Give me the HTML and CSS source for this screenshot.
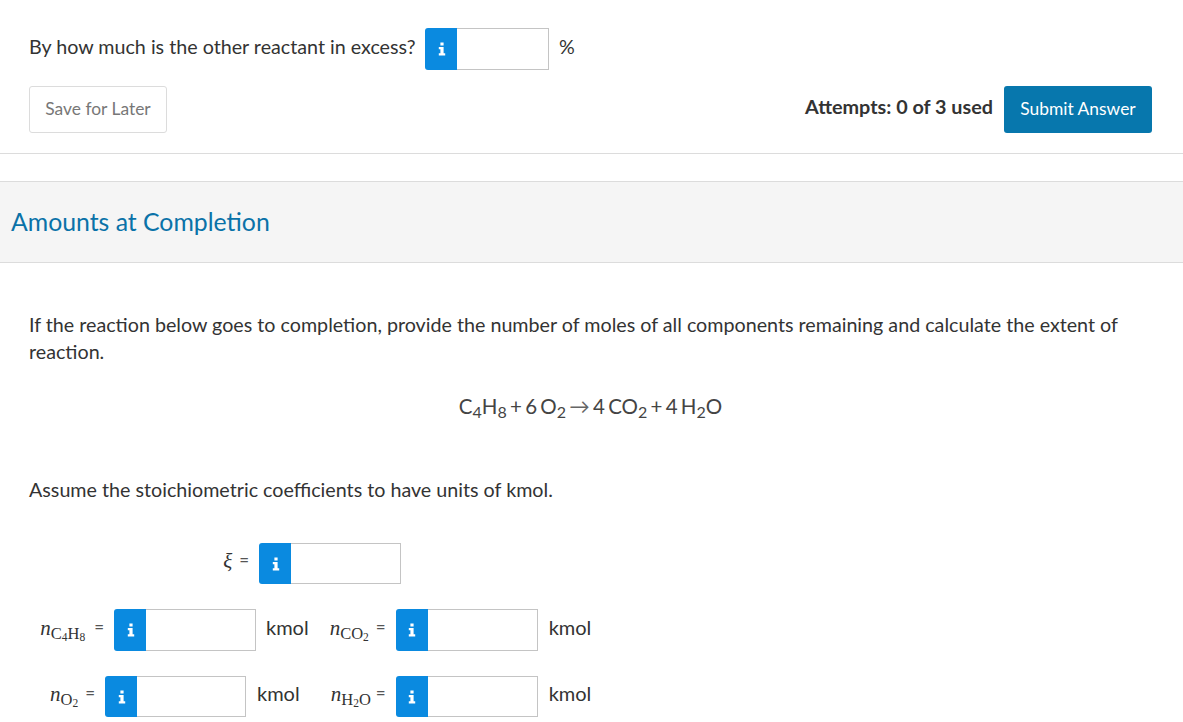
FILE: index.html
```html
<!DOCTYPE html>
<html lang="en">
<head>
<meta charset="utf-8">
<title>Amounts at Completion</title>
<link rel="stylesheet" href="styles.css">
</head>
<body>
<svg class="defs" width="0" height="0" aria-hidden="true"><symbol id="info" viewBox="0 0 10 16"><path d="M3 0h4v3.6H3zM1 5.6h6v7.6h2V16H1v-2.8h2V8.4H1z"/></symbol></svg>
<section class="top">
  <div class="question">
    <span class="q-text">By how much is the other reactant in excess?</span>
    <span class="field"><span class="info"><svg class="info-icon"><use href="#info"/></svg></span><span class="box"></span></span>
    <span class="unit">%</span>
  </div>
  <div class="actions">
    <button class="save">Save for Later</button>
    <div class="submit-group">
      <span class="attempts">Attempts: 0 of 3 used</span>
      <button class="submit">Submit Answer</button>
    </div>
  </div>
</section>
<h2 class="heading">Amounts at Completion</h2>
<section class="body">
  <p class="intro">If the reaction below goes to completion, provide the number of moles of all components remaining and calculate the extent of reaction.</p>
  <p class="equation">C<sub>4</sub>H<sub>8</sub> + 6 O<sub>2</sub> <span class="arrow">→</span> 4 CO<sub>2</sub> + 4 H<sub>2</sub>O</p>
  <p class="assume">Assume the stoichiometric coefficients to have units of kmol.</p>
  <div class="row row-xi">
    <span class="label"><i>ξ</i> <span class="eq">=</span></span>
    <span class="field"><span class="info"><svg class="info-icon"><use href="#info"/></svg></span><span class="box"></span></span>
  </div>
  <div class="row row-a">
    <span class="label l-c4h8"><i>n</i><sub>C<sub>4</sub>H<sub>8</sub></sub> <span class="eq">=</span></span>
    <span class="field"><span class="info"><svg class="info-icon"><use href="#info"/></svg></span><span class="box"></span></span>
    <span class="kmol">kmol</span>
    <span class="label l-co2"><i>n</i><sub>CO<sub>2</sub></sub> <span class="eq">=</span></span>
    <span class="field"><span class="info"><svg class="info-icon"><use href="#info"/></svg></span><span class="box"></span></span>
    <span class="kmol">kmol</span>
  </div>
  <div class="row row-b">
    <span class="label l-o2"><i>n</i><sub>O<sub>2</sub></sub> <span class="eq">=</span></span>
    <span class="field"><span class="info"><svg class="info-icon"><use href="#info"/></svg></span><span class="box"></span></span>
    <span class="kmol">kmol</span>
    <span class="label l-h2o"><i>n</i><sub>H<sub>2</sub>O</sub><span class="eq">=</span></span>
    <span class="field"><span class="info"><svg class="info-icon"><use href="#info"/></svg></span><span class="box"></span></span>
    <span class="kmol">kmol</span>
  </div>
</section>
</body>
</html>
```
FILE: styles.css
```css
* { box-sizing: border-box; }
html, body { margin: 0; padding: 0; height: 722px; overflow: hidden; }
body { background: #fff; color: #333; font-family: Lato, "Liberation Sans", sans-serif; font-size: 19.7px; }
.defs { position: absolute; }
.top { padding: 28px 31px 0 29px; height: 154px; border-bottom: 1px solid #dcdcdc; }
.question { display: flex; align-items: center; height: 42px; }
.q-text { width: 386px; white-space: nowrap; }
.q-text, .unit { margin-bottom: 6px; }
.field { display: inline-flex; width: 124px; height: 42px; margin-left: 10px; flex: none; }
.info { width: 32px; background: #0a8ae0; border-radius: 3px 0 0 3px; display: flex; align-items: center; justify-content: center; flex: none; padding-left: 1px; }
.info-icon { width: 8px; height: 14px; fill: #fff; }
.box { flex: 1; background: #fff; border: 1px solid #c4c4c4; border-left: 0; }
.unit { margin-left: 10px; }
.actions { display: flex; justify-content: space-between; align-items: flex-start; margin-top: 16px; }
button { font-family: inherit; font-size: 17.4px; height: 47px; border-radius: 3px; cursor: pointer; padding: 0 0 3px; }
.save { width: 138px; background: #fff; border: 1px solid #dcdcdc; color: #777; }
.submit-group { display: flex; gap: 11px; }
.attempts { font-weight: 700; font-size: 19.8px; line-height: 40px; }
.submit { width: 148px; background: #0777ad; border: 0; color: #fff; }
.heading { margin: 27px 0 0; height: 82px; background: #f5f5f5; border-top: 1px solid #dcdcdc; border-bottom: 1px solid #dcdcdc; padding-left: 11px; font-size: 24.8px; font-weight: 400; line-height: 80px; color: #0a72a8; }
.body { padding: 48px 29px 0; }
p { margin: 0; }
.intro { line-height: 27px; width: 1110px; }
.equation { margin-top: 27px; text-align: center; font-weight: 400; font-size: 20.5px; line-height: 28px; padding-right: 2px; word-spacing: -2px; color: #444; }
.equation sub { font-size: 16px; line-height: 0; vertical-align: -4px; }
.arrow { color: #666; }
.assume { margin-top: 56px; line-height: 27px; }
.row { display: flex; align-items: center; height: 42px; }
.row .field { width: 142px; }
.row .l-o2 + .field { width: 141px; }
.row-xi { height: 41px; margin-top: 40px; padding-left: 194px; }
.row-xi .field { height: 41px; }
.row-a { margin-top: 25px; }
.row-b { height: 41px; margin-top: 25px; }
.row-b .field { height: 41px; }
.label { font-family: "Liberation Serif", serif; font-size: 20px; white-space: nowrap; text-align: right; flex: none; margin-bottom: 4px; }
.label i { font-size: 21px; }
.label sub { font-size: 16.5px; line-height: 0; vertical-align: -4px; }
.label sub sub { font-size: 11.5px; vertical-align: -2px; }
.eq { font-family: Lato, sans-serif; font-size: 17px; color: #555; vertical-align: 2px; margin-left: 2px; }
.l-c4h8 .eq { margin-left: 4px; }
.l-o2 .eq { margin-left: 2px; }
.l-h2o .eq { margin-left: 5px; }
.kmol { margin-left: 10px; flex: none; margin-bottom: 6px; font-size: 20px; }
.kmol:last-child { margin-left: 11px; }
.l-o2 + .field + .kmol { margin-left: 11px; }
.row-b .kmol { margin-bottom: 8px; }
.row-xi .label { width: 26px; }
.l-c4h8 { width: 75px; }
.l-o2 { width: 66px; }
.l-co2 { width: 57px; margin-left: 20px; }
.l-h2o { width: 57px; margin-left: 29px; }
```
